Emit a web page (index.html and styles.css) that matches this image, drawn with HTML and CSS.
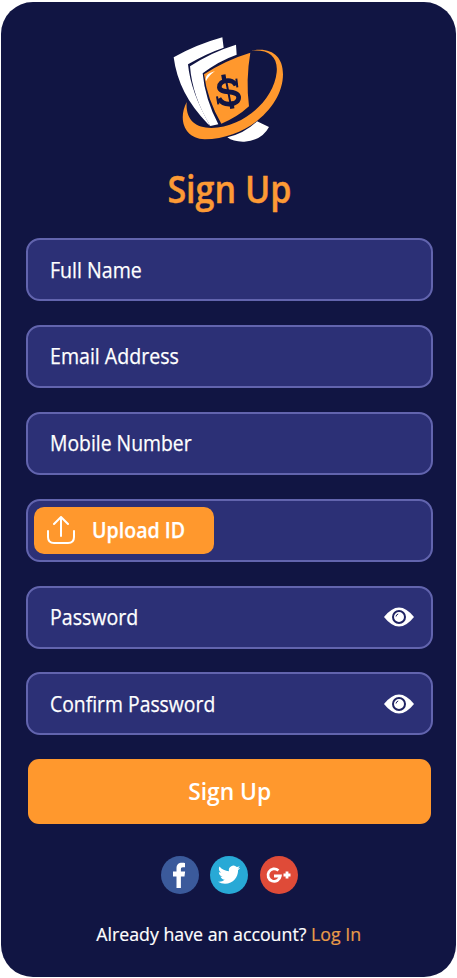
FILE: index.html
```html
<!DOCTYPE html>
<html lang="en">
<head>
<meta charset="utf-8">
<title>Sign Up</title>
<link rel="stylesheet" href="styles.css">
</head>
<body>
<main class="screen">
  <svg class="logo" viewBox="0 0 420 390" aria-hidden="true">
    <path fill="#fff" d="M41 97Q108 59 187 37L191 68Q138 86 84 118Q92 202 151 303L143 296Q55 207 41 97Z"/>
    <path fill="#fff" d="M90 124Q153 82 228 59L230 89Q176 108 128 145Q135 222 175 298L151 303Q97 215 90 124Z"/>
    <path fill="#ff982d" d="M132 148Q195 106 271 83Q257 165 267 244Q230 278 184 296Q142 225 132 148Z"/>
    <path fill="#fff" d="M138 169Q134 151 150 144L165 138Q145 153 138 169Z"/>
    <path fill="#ff982d" d="M273 77C333 65 369 92 369 148C369 241 267 340 134 343C73 341 53 284 80 231C76 283 105 309 154 309C254 307 342 223 350 142C355 92 323 72 273 77Z"/>
    <path fill="#fff" d="M202 337Q254 325 291 289L327 306Q306 346 253 350Q220 351 202 337Z"/>
    <path fill="none" stroke="#111543" stroke-width="14" d="M228 181C218 158 177 165 178 187C180 209 233 192 236 216C237 241 191 246 177 220"/>
    <path fill="none" stroke="#111543" stroke-width="13" d="M190 149L194 172M213 230L217 251"/>
    <path fill="none" stroke="#111543" stroke-width="6" d="M198 165L212 238M229 161L232 187M171 214L175 238"/>
  </svg>
  <h1 class="title"><span class="t">Sign Up</span></h1>
  <form class="form">
    <div class="field"><span class="t">Full Name</span></div>
    <div class="field"><span class="t">Email Address</span></div>
    <div class="field"><span class="t narrow">Mobile Number</span></div>
    <div class="field field-upload">
      <div class="upload">
        <svg class="upload-icon" viewBox="0 0 28 28" aria-hidden="true"><path d="M1 15v6q0 6 6 6h14q6 0 6-6v-6M14 20V2M7 8l7-7 7 7"/></svg>
        <span class="t">Upload ID</span>
      </div>
    </div>
    <div class="field"><span class="t">Password</span>
      <svg class="eye" viewBox="0 0 30 20" aria-hidden="true"><path fill="#fff" d="M0 10Q15-9 30 10Q15 29 0 10Z"/><circle class="iris" cx="15" cy="10" r="6"/><path class="glint" d="M12 9.5q.3-2 2.2-2.5"/></svg>
    </div>
    <div class="field"><span class="t narrow">Confirm Password</span>
      <svg class="eye" viewBox="0 0 30 20" aria-hidden="true"><path fill="#fff" d="M0 10Q15-9 30 10Q15 29 0 10Z"/><circle class="iris" cx="15" cy="10" r="6"/><path class="glint" d="M12 9.5q.3-2 2.2-2.5"/></svg>
    </div>
    <div class="submit"><span class="t">Sign Up</span></div>
  </form>
  <div class="social">
    <svg viewBox="0 0 38 38" aria-hidden="true"><circle cx="19" cy="19" r="19" fill="#3b5a9b"/><path fill="#fff" d="M15.5 32V20.5H12V15.6h3.5v-3.2c0-4 2.2-5.7 5.4-5.7 1.5 0 2.7.1 3.1.2v4.3h-2.1c-1.6 0-2 .8-2 2v2.4h4.2l-.6 4.9h-3.6V32Z"/></svg>
    <svg viewBox="0 0 38 38" aria-hidden="true"><circle cx="19" cy="19" r="19" fill="#28a9d6"/><path fill="#fff" transform="translate(8 7.5) scale(.93)" d="M23.95 4.57a10 10 0 0 1-2.82.77 4.96 4.96 0 0 0 2.16-2.72c-.95.56-2 .96-3.13 1.18a4.92 4.92 0 0 0-8.38 4.48C7.69 8.1 4.07 6.13 1.64 3.16a4.82 4.82 0 0 0-.67 2.48c0 1.71.87 3.21 2.19 4.1a4.9 4.9 0 0 1-2.23-.62v.06a4.92 4.92 0 0 0 3.95 4.83 5 5 0 0 1-2.21.08 4.94 4.94 0 0 0 4.6 3.42A9.87 9.87 0 0 1 0 19.54a13.99 13.99 0 0 0 7.55 2.21c9.06 0 14.01-7.5 14.01-13.98l-.02-.64a9.94 9.94 0 0 0 2.41-2.56z"/></svg>
    <svg viewBox="0 0 38 38" aria-hidden="true"><circle cx="19" cy="19" r="19" fill="#df4b38"/><path fill="none" stroke="#fff" stroke-width="2.8" d="M18.4 14.6A6.2 6.2 0 1 0 20.3 20H14M27 15.5v7M23.5 19h7"/></svg>
  </div>
  <p class="footer"><span class="t">Already have an account? <a>Log In</a></span></p>
</main>
</body>
</html>
```
FILE: styles.css
```css
* { box-sizing: border-box; }
body { margin: 0; background: #fff; font-family: "Open Sans", "Noto Sans", sans-serif; color: #fff; }
.screen {
  width: 455px;
  height: 975px;
  margin: 2px 1px 1px;
  padding-left: 2px;
  border-radius: 32px;
  background: #111543;
  display: flex;
  flex-direction: column;
  align-items: center;
  overflow: hidden;
}
.t { display: inline-block; white-space: nowrap; }
.logo { width: 140px; height: 130px; margin-top: 23px; flex: none; }
.title { margin: 9px 0 0; padding-right: 1px; height: 50px; line-height: 50px; font-size: 37px; font-weight: 600; color: #fd9a35; -webkit-text-stroke: .4px #fd9a35; }
.title .t { transform: scaleX(.92); }
.form { display: flex; flex-direction: column; gap: 23.9px; width: 407px; margin-top: 24px; }
.field {
  height: 63px;
  border: 2px solid #6264ae;
  border-radius: 14px;
  background: #2c3076;
  padding: 0 17px 0 22px;
  display: flex;
  align-items: center;
  justify-content: space-between;
  font-size: 22px;
  font-weight: 500;
  -webkit-text-stroke: .25px #fff;
}
.field .t { transform: scaleX(.89); transform-origin: left; padding-bottom: 2px; }
.field .narrow { transform: scaleX(.88); }
.field-upload { padding: 0 6px; }
.upload { width: 180px; height: 47px; border-radius: 10px; background: #ff982d; display: flex; align-items: center; gap: 17px; padding-left: 13px; font-weight: 600; }
.upload .t { padding-bottom: 3px; }
.upload-icon { width: 28px; height: 28px; flex: none; fill: none; stroke: #fff; stroke-width: 2; stroke-linecap: round; stroke-linejoin: round; }
.eye { width: 30px; height: 20px; flex: none; }
.iris { fill: #fff; stroke: #202463; stroke-width: 2; }
.iris + .glint { fill: none; stroke: #202463; stroke-width: 1; }
.submit { height: 65px; margin: 0 2px; border-radius: 11px; background: #ff982d; display: flex; align-items: center; justify-content: center; font-size: 24px; font-weight: 600; }
.submit .t { transform: scaleX(.95); padding-bottom: 2px; }
.social { display: flex; gap: 11.5px; margin: 32px 1px 0 0; }
.social svg { width: 38px; height: 38px; }
.footer { margin: 26px 2px 0 0; font-size: 19px; line-height: 28px; font-weight: 500; -webkit-text-stroke: .2px; }
.footer .t { transform: scaleX(.935); }
.footer a { color: #e99b49; }
```
